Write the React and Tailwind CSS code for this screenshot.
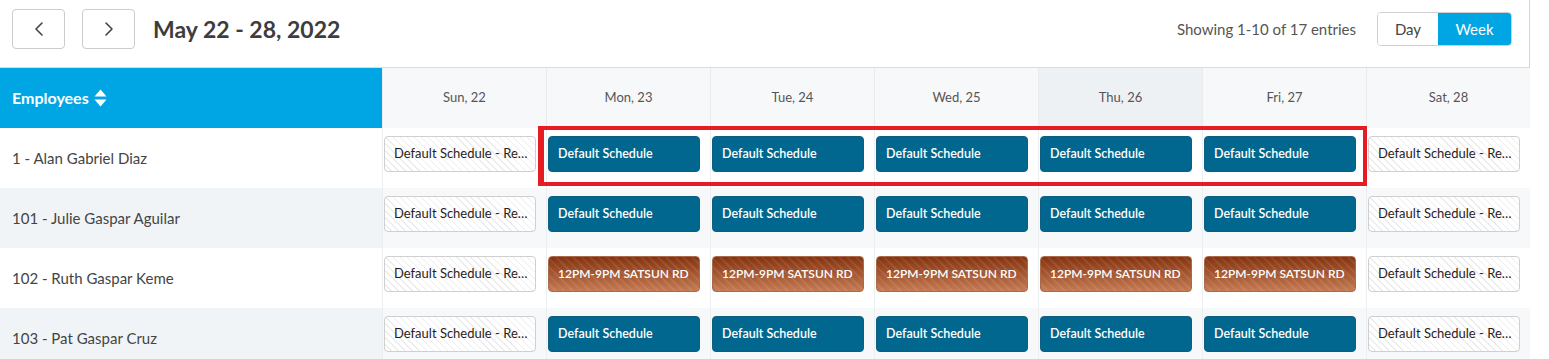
import React from 'react'
import { ChevronLeft, ChevronRight } from 'lucide-react'

const days = ['Sun, 22', 'Mon, 23', 'Tue, 24', 'Wed, 25', 'Thu, 26', 'Fri, 27', 'Sat, 28']

const rows = [
  { name: '1 - Alan Gabriel Diaz', kind: 'blue' },
  { name: '101 - Julie Gaspar Aguilar', kind: 'blue' },
  { name: '102 - Ruth Gaspar Keme', kind: 'brown' },
  { name: '103 - Pat Gaspar Cruz', kind: 'blue' },
]

function SortIcon() {
  return (
    <svg width="13" height="20" viewBox="0 0 13 20" className="ml-[5px]">
      <path d="M6.5 1.5 L12.5 8.5 L0.5 8.5 Z" fill="#fff" />
      <path d="M6.5 18.5 L12.5 11.5 L0.5 11.5 Z" fill="#fff" />
    </svg>
  )
}

function Chip({ kind }) {
  if (kind === 'off') {
    return (
      <div className="w-[152px] h-[36px] mt-2 rounded-[4px] border border-[#cfcfcf] flex items-center pl-[9px] text-[13px] text-[#2a1c22] whitespace-nowrap overflow-hidden bg-[image:repeating-linear-gradient(45deg,#ffffff_0px,#ffffff_4px,#ececec_4px,#ececec_5px)]">
        Default Schedule - Re…
      </div>
    )
  }
  if (kind === 'brown') {
    return (
      <div className="w-[152px] h-[36px] mt-2 rounded-[4px] border border-[#a9694a] flex items-center pl-[9px] text-[12px] font-semibold text-white whitespace-nowrap overflow-hidden bg-[image:repeating-linear-gradient(45deg,rgba(255,255,255,0)_0px,rgba(255,255,255,0)_4px,rgba(255,255,255,0.08)_4px,rgba(255,255,255,0.08)_6px),linear-gradient(to_bottom,#853410,#c47a52)]">
        12PM-9PM SATSUN RD
      </div>
    )
  }
  return (
    <div className="w-[152px] h-[36px] mt-2 rounded-[4px] border border-[#0c5f80] bg-[#02678e] flex items-center pl-[9px] text-[12.5px] font-semibold text-white whitespace-nowrap">
      Default Schedule
    </div>
  )
}

export default function App() {
  return (
    <div className="relative w-full bg-white font-['Lato','Liberation_Sans',sans-serif] text-[#444]">
      <div className="w-[1530px] border-r border-[#d6d6d6]">
        <div className="h-[68px] flex items-center pl-3 pr-[17px] pb-[9px] border-b border-[#dcdcdc]">
          <button className="w-[53px] h-[40px] rounded-[4px] border border-[#cccccc] flex items-center justify-center text-[#444]">
            <ChevronLeft size={24} strokeWidth={1.6} />
          </button>
          <button className="ml-[17px] w-[53px] h-[40px] rounded-[4px] border border-[#cccccc] flex items-center justify-center text-[#444]">
            <ChevronRight size={24} strokeWidth={1.6} />
          </button>
          <h1 className="ml-[18px] text-[23px] font-bold text-[#3d3d3d]">May 22 - 28, 2022</h1>
          <div className="ml-auto text-[15px] text-[#555]">Showing 1-10 of 17 entries</div>
          <div className="ml-[21px] flex h-[34px] rounded-[4px] border border-[#cfcfcf] overflow-hidden text-[15px]">
            <div className="w-[60px] flex items-center justify-center bg-white text-[#444]">Day</div>
            <div className="w-[73px] flex items-center justify-center bg-[#00a6e4] text-white">Week</div>
          </div>
        </div>

        <div className="grid grid-cols-[382px_repeat(7,164px)]">
          <div className="h-[60px] bg-[#00a6e4] flex items-center pl-3 text-[16px] font-bold text-white">
            Employees
            <SortIcon />
          </div>
          {days.map((d, i) => (
            <div
              key={d}
              className={
                'h-[60px] border-l border-[#e9ecef] flex items-center justify-center text-[13px] text-[#555] ' +
                (i === 4 ? 'bg-[#eef1f4]' : 'bg-[#f7f8fa]')
              }
            >
              {d}
            </div>
          ))}

          {rows.map((r, ri) => (
            <React.Fragment key={r.name}>
              <div
                className={
                  'h-[60px] flex items-center pl-3 text-[15px] text-[#444] ' +
                  (ri % 2 === 1 ? 'bg-[#f1f4f7]' : 'bg-white')
                }
              >
                {r.name}
              </div>
              {days.map((d, di) => (
                <div
                  key={d}
                  className={
                    'h-[60px] border-l border-[#eceff2] pl-px ' +
                    (ri % 2 === 1 ? 'bg-[#f7f8fa]' : 'bg-white')
                  }
                >
                  <Chip kind={di === 0 || di === 6 ? 'off' : r.kind} />
                </div>
              ))}
            </React.Fragment>
          ))}
        </div>
      </div>

      <div className="absolute left-[538px] top-[126px] w-[829px] h-[60px] border-4 border-l-[6px] border-[#e51c24] pointer-events-none" />
    </div>
  )
}
